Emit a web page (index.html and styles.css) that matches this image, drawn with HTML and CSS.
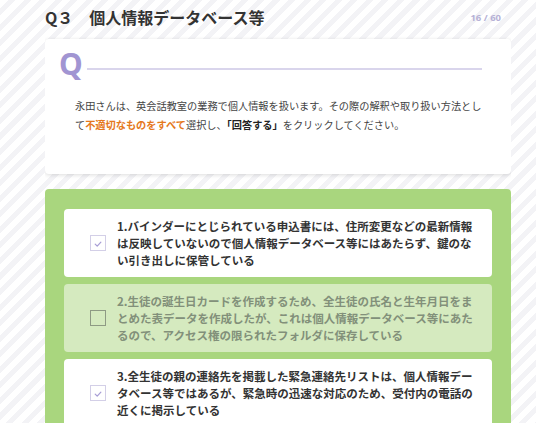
FILE: index.html
```html
<!DOCTYPE html>
<html lang="ja">
<head>
<meta charset="utf-8">
<link rel="stylesheet" href="styles.css">
</head>
<body>
<div class="page">
  <header class="head">
    <h1 class="title">Q３　個人情報データベース等</h1>
    <span class="count">16 / 60</span>
  </header>
  <section class="qcard">
    <div class="qrow">
      <span class="qmark">Q</span>
      <span class="qline"></span>
    </div>
    <p class="qtext">永田さんは、英会話教室の業務で個人情報を扱います。その際の解釈や取り扱い方法とし<br>て<strong class="hl">不適切なものをすべて</strong>選択し、<strong class="em">「回答する」</strong>をクリックしてください。</p>
  </section>
  <section class="answers">
    <div class="opt checked">
      <span class="box"><svg viewBox="0 0 16 16" width="16" height="16"><path d="M4.8 8.2 L7.1 10.5 L11.3 5.9" fill="none" stroke="#a89ed6" stroke-width="1.4" stroke-linecap="round" stroke-linejoin="round"/></svg></span>
      <p class="otext">1.バインダーにとじられている申込書には、住所変更などの最新情報<br>は反映していないので個人情報データベース等にはあたらず、鍵のな<br>い引き出しに保管している</p>
    </div>
    <div class="opt dim">
      <span class="box"></span>
      <p class="otext">2.生徒の誕生日カードを作成するため、全生徒の氏名と生年月日をま<br>とめた表データを作成したが、これは個人情報データベース等にあた<br>るので、アクセス権の限られたフォルダに保存している</p>
    </div>
    <div class="opt checked">
      <span class="box"><svg viewBox="0 0 16 16" width="16" height="16"><path d="M4.8 8.2 L7.1 10.5 L11.3 5.9" fill="none" stroke="#a89ed6" stroke-width="1.4" stroke-linecap="round" stroke-linejoin="round"/></svg></span>
      <p class="otext">3.全生徒の親の連絡先を掲載した緊急連絡先リストは、個人情報デー<br>タベース等ではあるが、緊急時の迅速な対応のため、受付内の電話の<br>近くに掲示している</p>
    </div>
  </section>
</div>
</body>
</html>
```

FILE: styles.css
```css
* { box-sizing: border-box; }
html, body { margin: 0; padding: 0; }
body {
  width: 536px;
  height: 423px;
  overflow: hidden;
  font-family: "Noto Sans CJK JP", "Noto Sans", sans-serif;
  color: #333;
  background: repeating-linear-gradient(135deg, #ffffff 0 6px, #f3f3f6 6px 11px);
}
.page {
  width: 466px;
  margin-left: 45px;
  height: 423px;
  overflow: hidden;
}
.head {
  display: flex;
  align-items: center;
  justify-content: space-between;
  height: 39px;
  padding: 0 10px 5px 0;
}
.title {
  margin: 0;
  font-size: 16px;
  line-height: 20px;
  font-weight: 700;
  color: #333;
}
.count {
  font-family: "Noto Sans", sans-serif;
  font-size: 9.5px;
  font-weight: 700;
  color: #b6b1d6;
}
.qcard {
  background: #fff;
  border-radius: 4px;
  box-shadow: 0 1px 4px rgba(0,0,0,0.14);
  padding: 10px 29px 41px 14px;
  height: 135px;
}
.qrow {
  display: flex;
  align-items: center;
  height: 30px;
}
.qmark {
  font-family: "Noto Sans", sans-serif;
  font-size: 30px;
  line-height: 30px;
  font-weight: 700;
  color: #a195d2;
}
.qline {
  flex: 1;
  height: 1.5px;
  margin-left: 4px;
  margin-top: 10px;
  background: #d9d5ec;
}
.qtext {
  margin: 18px 0 0 16px;
  font-size: 10.2px;
  line-height: 18.5px;
  color: #444;
  white-space: nowrap;
}
.hl { color: #e5781c; font-weight: 700; }
.em { color: #222; font-weight: 700; }
.answers {
  margin-top: 15px;
  background: #a9d67e;
  border-radius: 4px;
  padding: 20px 19px;
  display: flex;
  flex-direction: column;
  gap: 7px;
}
.opt {
  display: flex;
  align-items: center;
  background: #fff;
  border-radius: 4px;
  padding: 8.5px 10px 8.5px 26px;
}
.opt.dim {
  background: #d5eabf;
}
.box {
  flex: none;
  width: 16px;
  height: 16px;
  margin-right: 11px;
  border: 1px solid #d3cfe7;
  background: #fff;
  display: flex;
}
.dim .box {
  background: transparent;
  border: 1.5px solid #8e9a84;
}
.otext {
  margin: 0;
  font-size: 11.5px;
  line-height: 17px;
  font-weight: 700;
  color: #333;
  white-space: nowrap;
}
.dim .otext { color: #82907a; }
```
